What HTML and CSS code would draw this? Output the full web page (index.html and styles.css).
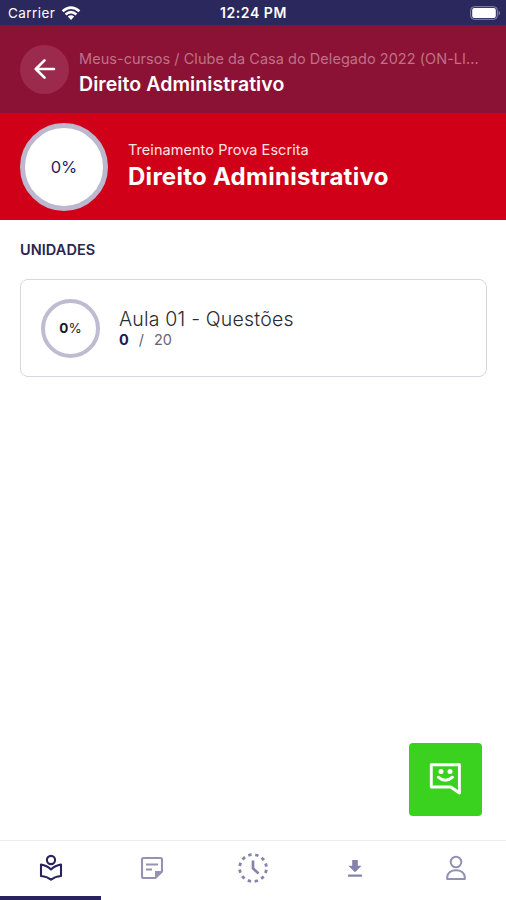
FILE: index.html
```html
<!DOCTYPE html>
<html lang="pt-BR">
<head>
<meta charset="utf-8">
<title>Direito Administrativo</title>
<link rel="stylesheet" href="styles.css">
</head>
<body>
<div class="app">
  <div class="status">
    <div class="carrier"><span>Carrier</span>
      <svg width="20" height="15" viewBox="0 0 20 15" fill="none" stroke="#fff" stroke-width="2.7"><path d="M1.6 5.2Q10-2 18.4 5.2M4.6 8.5Q10 3.8 15.4 8.5"/><path d="M6.8 10.6Q10 7.7 13.2 10.6L10 14Z" fill="#fff" stroke="none"/></svg>
    </div>
    <span class="time">12:24 PM</span>
    <div class="battery"><svg width="31" height="14" viewBox="0 0 31 14"><rect x=".7" y=".7" width="26.6" height="12.6" rx="3.5" fill="none" stroke="#8d8cab"/><rect x="2.2" y="2" width="23.6" height="10" rx="2" fill="#fff"/><path d="M28.7 4.5Q31 7 28.7 9.5Z" fill="#9a99b5"/></svg></div>
  </div>
  <header class="header">
    <div class="back"><svg width="22" height="22" viewBox="0 0 22 22" fill="none" stroke="#fff" stroke-width="2.6" stroke-linecap="round" stroke-linejoin="round"><path d="M20 11H2.3M10.5 2.3L1.8 11L10.5 19.7"/></svg></div>
    <div class="heading">
      <div class="crumbs">Meus-cursos / Clube da Casa do Delegado 2022 (ON-LI...</div>
      <div class="page-title">Direito Administrativo</div>
    </div>
  </header>
  <section class="banner">
    <div class="ring ring-large">0%</div>
    <div class="banner-text">
      <div class="banner-sub">Treinamento Prova Escrita</div>
      <h1>Direito Administrativo</h1>
    </div>
  </section>
  <main>
    <h2>UNIDADES</h2>
    <div class="card">
      <div class="ring ring-small"><b>0</b>%</div>
      <div class="card-text">
        <div class="lesson">Aula 01 - Questões</div>
        <div class="count"><b>0</b><span>/</span><span>20</span></div>
      </div>
    </div>
  </main>
  <div class="chat"><svg width="34" height="34" viewBox="0 0 34 34" fill="none" stroke="#fff" stroke-width="2.9"><path d="M3.3 2.8H31.4V31L22.8 25H3.3Z" stroke-linejoin="round"/><circle cx="13" cy="9.6" r="2.5" fill="#fff" stroke="none"/><circle cx="22" cy="9.6" r="2.5" fill="#fff" stroke="none"/><path d="M10.3 15.2Q17.3 21.5 24.5 15.2" stroke-linecap="round"/></svg></div>
  <nav>
    <div class="tab active"><svg width="24" height="28" viewBox="0 0 24 28" fill="none" stroke="#28225f" stroke-width="2.1"><circle cx="12" cy="6" r="4.1"/><path d="M2 10.5Q8 11.5 12 15.5Q16 11.5 22 10.5V22Q16 22.5 12 25.7Q8 22.5 2 22Z" stroke-linejoin="round"/></svg></div>
    <div class="tab"><svg width="24" height="24" viewBox="0 0 24 24" fill="none" stroke="#9693b2" stroke-width="2.1"><path d="M3.5 2H20.5Q22 2 22 3.5V15.5L15.5 22H3.5Q2 22 2 20.5V3.5Q2 2 3.5 2Z"/><path d="M22 15H15V22Z" fill="#9693b2" stroke="none"/><path d="M6 8.5H18M6 13.5H12"/></svg></div>
    <div class="tab"><svg width="30" height="30" viewBox="0 0 30 30" fill="none" stroke="#8583a8" stroke-width="2.8"><circle cx="15" cy="15" r="13.4" stroke-dasharray="3.3 3.716" stroke-dashoffset="-1.86"/><path d="M15 7.5V15.3L20.5 20.5" stroke-width="2.7"/></svg></div>
    <div class="tab"><svg width="16" height="20" viewBox="0 0 16 20" fill="#8583ac"><path d="M5.2 2H10.8V7.7H14.6L8 14.3L1.4 7.7H5.2ZM1 16.5H15V18.7H1Z"/></svg></div>
    <div class="tab"><svg width="20" height="26" viewBox="0 0 20 26" fill="none" stroke="#9490b4" stroke-width="2"><circle cx="10" cy="7" r="5.3"/><path d="M1.2 24V22Q2.2 15.2 10 15.2Q17.8 15.2 18.8 22V24Z" stroke-linejoin="round"/></svg></div>
  </nav>
</div>
</body>
</html>
```
FILE: styles.css
```css
* { box-sizing: border-box; }
body { margin: 0; font-family: Inter, "Liberation Sans", sans-serif; background: #fff; }
svg { display: block; }
.app { position: relative; height: 900px; display: flex; flex-direction: column; overflow: hidden; white-space: nowrap; }
.status { height: 25px; background: #2a285c; color: #fff; display: grid; grid-template-columns: 1fr auto 1fr; align-items: center; padding: 1px 7px 0 8px; }
.carrier { display: flex; align-items: center; gap: 6px; font-size: 13.5px; letter-spacing: .45px; }
.time { font-size: 14px; line-height: 18px; padding-bottom: 1px; font-weight: 600; letter-spacing: .55px; }
.battery { justify-self: end; margin-right: -2px; }
.header { height: 88px; background: #8c1235; display: flex; align-items: center; padding-left: 20px; gap: 10px; }
.back { width: 49px; height: 49px; border-radius: 50%; background: #9b2a4c; display: grid; place-items: center; }
.crumbs { font-size: 14.5px; line-height: 22px; letter-spacing: .04px; color: #be7189; }
.page-title { font-size: 19.5px; line-height: 29px; letter-spacing: .08px; font-weight: 600; color: #fff; }
.heading { padding-top: 8px; }
.banner { height: 107px; background: #d00018; color: #fff; display: flex; align-items: center; padding-left: 20px; gap: 20px; }
.ring { border-radius: 50%; background: #fff; display: flex; align-items: center; justify-content: center; flex: none; }
.ring-large { width: 88px; height: 88px; border: 5px solid #bcb8ce; color: #28225f; font-size: 16.5px; }
.banner-text { padding-bottom: 1px; }
.banner-sub { font-size: 14.5px; line-height: 22px; letter-spacing: .05px; color: #ffe3e6; }
h1 { margin: 0; font-size: 24px; line-height: 32px; letter-spacing: .27px; font-weight: 700; }
main { flex: 1; padding: 20px 19px 0 20px; }
h2 { margin: 0 0 20px; font-size: 14.5px; line-height: 19px; font-weight: 600; letter-spacing: .05px; color: #28254f; }
.card { height: 98px; border: 1.5px solid #d8d7e1; border-radius: 8px; display: flex; align-items: center; padding-left: 20px; gap: 19px; }
.card-text { padding-top: 1px; }
.ring-small { width: 59px; height: 59px; border: 4px solid #bfbcd1; font-size: 13.5px; color: #1b1a25; }
.lesson { font-size: 19.5px; line-height: 22px; letter-spacing: .2px; color: #2b2b32; font-weight: 300; }
.count { display: flex; gap: 10px; font-size: 14.5px; line-height: 20px; color: #666571; }
.count b { color: #1e1956; }
.chat { position: absolute; right: 24px; bottom: 84px; width: 73px; height: 73px; border-radius: 4px; background: #3bd21f; display: grid; place-items: center; padding: 0 2px 2px 0; }
nav { height: 60px; border-top: 1px solid #ededf0; display: grid; grid-template-columns: repeat(5, 1fr); }
.tab { display: grid; place-items: center; padding: 0 0 1px 1px; border-bottom: 4px solid transparent; }
.active { border-bottom-color: #28225f; }
```
